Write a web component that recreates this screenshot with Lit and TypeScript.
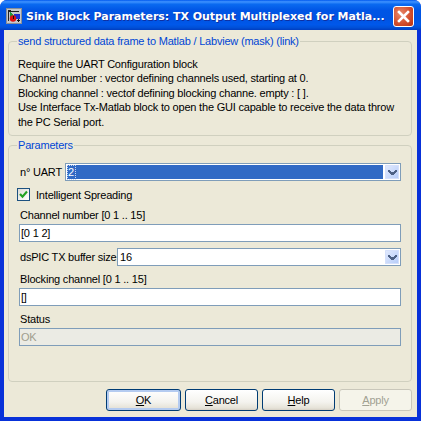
import { LitElement, html, css, svg } from "lit";
import { customElement } from "lit/decorators.js";

const chevron = svg`<svg width="9" height="7" viewBox="0 0 9 7" shape-rendering="crispEdges"><path fill="#4d6185" d="M0 1h2v1h1v1h3V2h1V1h2v2H8v1H7v1H6v1H3V5H2V4H1V3H0z"/></svg>`;

@customElement("app-root")
export class AppRoot extends LitElement {
  static styles = css`
    :host { display: block; width: 421px; height: 421px; background: #fff; font-family: "Liberation Sans", Arial, sans-serif; font-size: 11px; letter-spacing: -0.2px; color: #000; }
    .win { width: 421px; height: 421px; display: flex; flex-direction: column; border-radius: 7px 7px 0 0; overflow: hidden; background: #0831d9; box-sizing: border-box; }
    .title { height: 30px; flex: none; display: flex; align-items: center; box-sizing: border-box; padding: 2px 7px 0 6px; gap: 4px;
      background: linear-gradient(180deg, #0058ee 0%, #3f93ff 6%, #0a6af0 14%, #0055e5 35%, #0054e3 60%, #0058ea 82%, #0050d8 92%, #003dc0 100%); }
    .title svg { flex: none; }
    .ttext { flex: 1; min-width: 0; padding-top: 1px; color: #fff; font: bold 11px "DejaVu Sans", sans-serif; letter-spacing: -0.04px; white-space: nowrap; text-shadow: 1px 1px 0 #0f2fa0; }
    .close { width: 21px; height: 21px; flex: none; box-sizing: border-box; border: 1px solid #fff; border-radius: 3px; background: radial-gradient(circle at 35% 35%, #e88a6c, #d4502f 55%, #b93010); display: flex; align-items: center; justify-content: center; }
    .client { flex: 1; margin: 0 4px 4px 4px; background: #ece9d8; box-sizing: border-box; padding: 4px 5px 6px 4px; display: flex; flex-direction: column; min-height: 0; }
    fieldset { margin: 0; padding: 0; border: 1px solid #d0d0bf; border-radius: 4px; min-width: 0; box-sizing: border-box; }
    legend { color: #0046d5; padding: 0 1px; line-height: 14px; white-space: nowrap; }
    .desc { height: 102px; padding: 9px 9px 0 9px; flex: none; }
    .desc legend { margin-left: -1px; }
    .desc div { white-space: nowrap; height: 14.4px; line-height: 14.4px; }
    .params { margin-top: 2px; height: 244px; flex: none; padding: 11px 10px 0 10px; }
    .params legend { margin-left: -2px; }
    .row { display: flex; align-items: center; height: 18px; }
    .lbl { white-space: nowrap; height: 14px; line-height: 14px; padding-left: 1px; box-sizing: border-box; }
    .w1 { width: 46px; flex: none; }
    .w2 { width: 98px; flex: none; }
    .field { flex: 1; height: 18px; border: 1px solid #7f9db9; background: #fff; box-sizing: border-box; display: flex; align-items: center; padding: 0 1px; line-height: 14px; min-width: 0; }
    .sel { background: #316ac5; color: #fff; align-self: stretch; flex: 1; border: 1px solid #fff; display: flex; align-items: center; padding-left: 1px; margin-left: -1px; }
    .sel span { outline: 1px dotted #c9d8f2; padding: 0 1px 0 0; line-height: 13px; }
    .val { padding-left: 1px; flex: 1; }
    .arrow { width: 14px; height: 14px; flex: none; margin-left: 1px; border-radius: 1px; background: linear-gradient(135deg, #e3ebfe, #b4cbf8); display: flex; align-items: center; justify-content: center; box-shadow: inset 0 0 0 1px #d5e0fb; }
    .check { display: flex; align-items: center; gap: 6px; margin: 7px 0 0 -2px; height: 13px; }
    .check .lbl { padding-left: 0; }
    .box { width: 13px; height: 13px; box-sizing: border-box; border: 1px solid #1c5180; background: linear-gradient(135deg, #dcdcd7, #fff); display: flex; align-items: center; justify-content: center; }
    .stack { display: flex; flex-direction: column; gap: 1px; }
    .s1 { margin-top: 7px; }
    .s2 { margin-top: 6px; }
    .s3 { margin-top: 6px; }
    .s4 { margin-top: 6px; }
    .stack .lbl { height: 15px; line-height: 15px; }
    .full { flex: none; padding-left: 1px; }
    .dis { background: #ebebe4; color: #a09e8e; }
    .buttons { display: flex; justify-content: flex-end; gap: 4px; margin-top: 7px; height: 22px; flex: none; }
    .btn { height: 22px; width: 73px; box-sizing: border-box; border: 1px solid #003c74; border-radius: 3px; background: linear-gradient(180deg, #fff 0%, #f4f3ee 60%, #e6e3d8 90%, #d6d0c5 100%); display: flex; align-items: center; justify-content: center; line-height: 14px; }
    .btn.def { width: 75px; box-shadow: inset 0 0 0 2px #b4cbf0; }
    .btn.off { border-color: #c9c7ba; background: #f5f4ea; color: #a1a192; }
    .btn u { text-underline-offset: 1px; }
  `;

  render() {
    return html`<div class="win">
      <div class="title">
        <svg width="16" height="16" viewBox="0 0 16 16" shape-rendering="crispEdges">
          <rect width="16" height="16" fill="#8a8f96"/>
          <rect x="1" y="1" width="14" height="14" fill="#c4c8cc"/>
          <path d="M2 2h3v1h8v1H3v9H2z" fill="#222"/>
          <path d="M4 3l5 6H4z" fill="#1e9a3c"/>
          <rect x="8" y="6" width="6" height="5" fill="#2330d0"/>
          <circle cx="7" cy="10.5" r="3.2" fill="#e01010" shape-rendering="auto"/>
          <path d="M7 8h1v3H7zM12 11h1v1h1v1h-1v1h-1v-1h-1v-1h1z" fill="#111"/>
        </svg>
        <div class="ttext">Sink Block Parameters: TX Output Multiplexed for Matla...</div>
        <div class="close">
          <svg width="13" height="13" viewBox="0 0 13 13"><path d="M2 2l9 9M11 2l-9 9" stroke="#fff" stroke-width="2.6" stroke-linecap="square" fill="none"/></svg>
        </div>
      </div>
      <div class="client">
        <fieldset class="desc">
          <legend>send structured data frame to Matlab / Labview (mask) (link)</legend>
          <div>Require the UART Configuration block</div>
          <div>Channel number : vector defining channels used, starting at 0.</div>
          <div>Blocking channel : vectof defining blocking channe. empty : [ ].</div>
          <div>Use Interface Tx-Matlab block to open the GUI capable to receive the data throw</div>
          <div>the PC Serial port.</div>
        </fieldset>
        <fieldset class="params">
          <legend>Parameters</legend>
          <div class="row">
            <span class="lbl w1">n° UART</span>
            <div class="field"><div class="sel"><span>2</span></div><div class="arrow">${chevron}</div></div>
          </div>
          <div class="check">
            <div class="box"><svg width="9" height="9" viewBox="0 0 9 9"><path d="M1 4l2.5 2.7L8 1.6" stroke="#21a121" stroke-width="2.2" fill="none"/></svg></div>
            <span class="lbl">Intelligent Spreading</span>
          </div>
          <div class="stack s1">
            <span class="lbl">Channel number [0 1 .. 15]</span>
            <div class="field full">[0 1 2]</div>
          </div>
          <div class="row s2">
            <span class="lbl w2">dsPIC TX buffer size</span>
            <div class="field"><div class="val">16</div><div class="arrow">${chevron}</div></div>
          </div>
          <div class="stack s3">
            <span class="lbl">Blocking channel [0 1 .. 15]</span>
            <div class="field full">[]</div>
          </div>
          <div class="stack s4">
            <span class="lbl">Status</span>
            <div class="field full dis">OK</div>
          </div>
        </fieldset>
        <div class="buttons">
          <div class="btn def"><span><u>O</u>K</span></div>
          <div class="btn"><span><u>C</u>ancel</span></div>
          <div class="btn"><span><u>H</u>elp</span></div>
          <div class="btn off"><span><u>A</u>pply</span></div>
        </div>
      </div>
    </div>`;
  }
}
